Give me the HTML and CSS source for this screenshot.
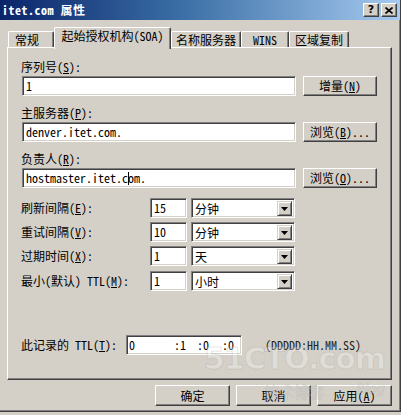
FILE: index.html
```html
<!DOCTYPE html>
<html lang="zh-CN">
<head>
<meta charset="utf-8">
<title>itet.com 属性</title>
<link rel="stylesheet" href="styles.css">
</head>
<body>
<div class="window">
  <div class="titlebar">
    <span class="title">itet.com 属性</span>
    <div class="tbtns">
      <span class="tbtn help">?</span>
      <span class="tbtn close"><svg width="8" height="7" viewBox="0 0 8 7"><path d="M0.5 0.5 L7.5 6.5 M7.5 0.5 L0.5 6.5" stroke="#000" stroke-width="1.6" fill="none"/></svg></span>
    </div>
  </div>

  <div class="tabs">
    <div class="tab tab-first">常规</div>
    <div class="tab tab-active">起始授权机构(SOA)</div>
    <div class="tab tab-ns">名称服务器</div>
    <div class="tab tab-wins">WINS</div>
    <div class="tab tab-zone">区域复制</div>
  </div>

  <div class="panel">
    <div class="field">
      <div class="label">序列号(<u>S</u>):</div>
      <div class="frow">
        <div class="edit wide">1</div>
        <div class="btn side">增量(<u>N</u>)</div>
      </div>
    </div>
    <div class="field">
      <div class="label">主服务器(<u>P</u>):</div>
      <div class="frow">
        <div class="edit wide">denver.itet.com.</div>
        <div class="btn side">浏览(<u>B</u>)...</div>
      </div>
    </div>
    <div class="field">
      <div class="label">负责人(<u>R</u>):</div>
      <div class="frow">
        <div class="edit wide">hostmaster.itet.c<span class="caret"></span>om.</div>
        <div class="btn side">浏览(<u>O</u>)...</div>
      </div>
    </div>

    <div class="times">
      <div class="trow">
        <div class="tlabel">刷新间隔(<u>E</u>):</div>
        <div class="edit num">15</div>
        <div class="select"><span class="stext">分钟</span><span class="sbtn"><svg width="7" height="4" viewBox="0 0 7 4"><path d="M0 0 H7 L3.5 4 Z" fill="#000"/></svg></span></div>
      </div>
      <div class="trow">
        <div class="tlabel">重试间隔(<u>V</u>):</div>
        <div class="edit num">10</div>
        <div class="select"><span class="stext">分钟</span><span class="sbtn"><svg width="7" height="4" viewBox="0 0 7 4"><path d="M0 0 H7 L3.5 4 Z" fill="#000"/></svg></span></div>
      </div>
      <div class="trow">
        <div class="tlabel">过期时间(<u>X</u>):</div>
        <div class="edit num">1</div>
        <div class="select"><span class="stext">天</span><span class="sbtn"><svg width="7" height="4" viewBox="0 0 7 4"><path d="M0 0 H7 L3.5 4 Z" fill="#000"/></svg></span></div>
      </div>
      <div class="trow min">
        <div class="tlabel">最小(默认) TTL(<u>M</u>):</div>
        <div class="edit num">1</div>
        <div class="select"><span class="stext">小时</span><span class="sbtn"><svg width="7" height="4" viewBox="0 0 7 4"><path d="M0 0 H7 L3.5 4 Z" fill="#000"/></svg></span></div>
      </div>
    </div>

    <div class="ttlrow">
      <div class="ttllabel">此记录的 TTL(<u>T</u>):</div>
      <div class="edit ttl"><span class="seg d">0</span><span class="seg h">:1</span><span class="seg m">:0</span><span class="seg s">:0</span></div>
      <div class="fmt">(DDDDD:HH.MM.SS)</div>
    </div>
  </div>

  <div class="actions">
    <div class="btn act">确定</div>
    <div class="btn act">取消</div>
    <div class="btn act">应用(<u>A</u>)</div>
  </div>

  <div class="wm-big">51CTO.com</div>
  <div class="wm-small">技术博客</div>
  <div class="wm-blog">Blog</div>
</div>
</body>
</html>
```

FILE: styles.css
```css
* { box-sizing: border-box; }
html, body { margin: 0; padding: 0; }
body {
  width: 401px;
  height: 415px;
  overflow: hidden;
  background: #d4d0c8;
  font-family: "Noto Sans Mono CJK SC", "Noto Sans CJK SC", monospace;
  font-size: 12px;
  line-height: 14px;
  color: #000;
}
u { text-decoration: underline; text-underline-offset: 1px; }

.window {
  position: relative;
  width: 401px;
  height: 412px;
  overflow: hidden;
  border-right: 1px solid #404040;
  border-bottom: 1px solid #404040;
  box-shadow: inset -1px -1px #808080;
}

.titlebar {
  height: 20px;
  display: flex;
  align-items: center;
  padding: 0 3px 0 2px;
  background: linear-gradient(to right, #0a246a 0%, #3a6ea5 45%, #a6caf0 100%);
}
.title {
  color: #fff;
  font-weight: bold;
  font-size: 12px;
  letter-spacing: 0.5px;
}
.tbtns { margin-left: auto; display: flex; gap: 2px; }
.tbtn {
  width: 16px;
  height: 14px;
  display: flex;
  align-items: center;
  justify-content: center;
  background: #d4d0c8;
  border: 1px solid;
  border-color: #fff #404040 #404040 #fff;
  box-shadow: inset -1px -1px #808080;
  font-family: "DejaVu Sans", sans-serif;
  font-weight: bold;
  font-size: 11px;
  line-height: 12px;
}

.tabs {
  display: flex;
  align-items: flex-end;
  height: 20px;
  margin: 7px 0 0 8px;
}
.tab {
  height: 16px;
  padding-top: 1px;
  text-align: center;
  border-top: 1px solid #fff;
  border-left: 1px solid #fff;
  border-right: 1px solid #404040;
  box-shadow: inset -1px 0 #808080;
  border-radius: 2px 2px 0 0;
  white-space: nowrap;
}
.tab-first { width: 46px; text-align: left; padding-left: 6px; }
.tab-active {
  position: relative;
  z-index: 1;
  width: 117px;
  height: 22px;
  margin-bottom: -2px;
  background: #d4d0c8;
  padding-top: 1px;
}
.tab-ns { width: 70px; }
.tab-wins { width: 48px; }
.tab-zone { width: 60px; }

.panel {
  width: 385px;
  height: 333px;
  margin-left: 7px;
  padding: 12px 0 0 14px;
  border: 1px solid;
  border-color: #fff #404040 #404040 #fff;
  box-shadow: inset -1px -1px #808080;
}

.field { margin-bottom: 10px; }
.label { height: 14px; margin: 0 0 2px -1px; white-space: nowrap; }
.frow { display: flex; gap: 7px; }

.edit {
  height: 20px;
  background: #fff;
  border: 1px solid;
  border-color: #808080 #fff #fff #808080;
  box-shadow: inset 1px 1px #404040, inset -1px -1px #d4d0c8;
  padding: 2px 0 0 3px;
  white-space: nowrap;
}
.wide { width: 274px; }
.caret {
  display: inline-block;
  width: 1px;
  height: 13px;
  background: #000;
  vertical-align: -2px;
  margin: 0 -1px 0 0;
}

.btn {
  display: flex;
  align-items: center;
  justify-content: center;
  background: #d4d0c8;
  border: 1px solid;
  border-color: #fff #404040 #404040 #fff;
  box-shadow: inset -1px -1px #808080;
  white-space: nowrap;
}
.side { width: 74px; height: 20px; }

.times { margin-top: 2px; }
.trow {
  display: flex;
  align-items: center;
  height: 20px;
  margin-bottom: 4px;
}
.trow.min { margin-top: 5px; }
.tlabel { width: 128px; margin-left: -1px; white-space: nowrap; }
.num { width: 37px; margin-left: 1px; }
.select {
  width: 104px;
  height: 20px;
  margin-left: 4px;
  display: flex;
  align-items: center;
  background: #fff;
  border: 1px solid;
  border-color: #808080 #fff #fff #808080;
  box-shadow: inset 1px 1px #404040, inset -1px -1px #d4d0c8;
  padding: 0 2px 0 3px;
}
.stext { flex: 1; padding-top: 1px; }
.sbtn {
  width: 15px;
  height: 15px;
  display: flex;
  align-items: center;
  justify-content: center;
  background: #d4d0c8;
  border: 1px solid;
  border-color: #d4d0c8 #404040 #404040 #d4d0c8;
  box-shadow: inset 1px 1px #fff, inset -1px -1px #808080;
  margin-top: 1px;
}

.ttlrow {
  display: flex;
  align-items: center;
  margin-top: 44px;
  height: 20px;
}
.ttllabel { width: 105px; margin-left: -1px; white-space: nowrap; }
.ttl { width: 116px; padding-left: 2px; display: flex; }
.seg { display: block; }
.seg.d { width: 45px; }
.seg.h { width: 23px; }
.seg.m { width: 25px; }
.fmt { margin-left: 23px; white-space: nowrap; color: #222; }

.actions {
  display: flex;
  justify-content: flex-end;
  gap: 6px;
  margin-top: 5px;
  padding-right: 8px;
}
.act { width: 75px; height: 21px; }

.wm-big, .wm-small, .wm-blog {
  position: absolute;
  pointer-events: none;
  white-space: nowrap;
  color: rgba(255, 255, 255, 0.3);
  -webkit-text-stroke: 1px rgba(150, 150, 150, 0.25);
}
.wm-big {
  left: 204px;
  top: 342px;
  font-family: "DejaVu Sans", sans-serif;
  font-size: 30px;
  line-height: 34px;
  font-weight: bold;
  letter-spacing: -1px;
}
.wm-small {
  left: 264px;
  top: 383px;
  font-family: "Noto Sans CJK SC", sans-serif;
  font-size: 15px;
  line-height: 18px;
}
.wm-blog {
  left: 356px;
  top: 381px;
  font-family: "DejaVu Sans", sans-serif;
  font-style: italic;
  font-size: 13px;
  line-height: 16px;
}
```
